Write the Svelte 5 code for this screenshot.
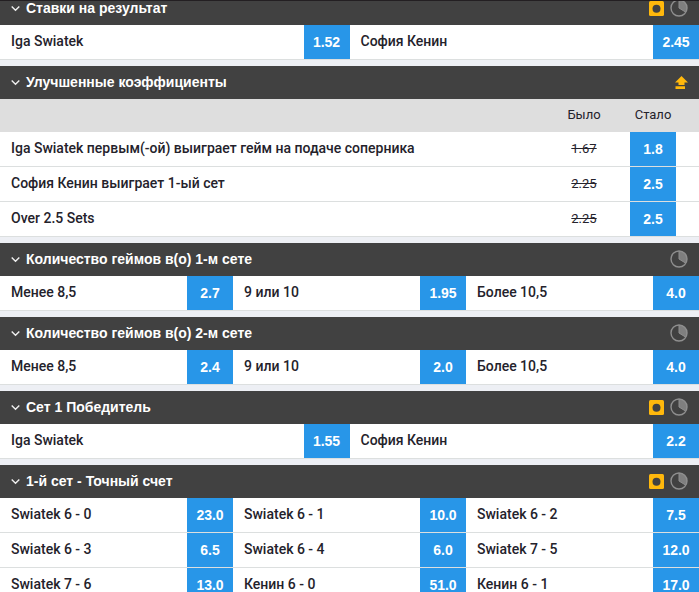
<script lang="ts">
	type Badge = 'cashout' | 'stats' | 'boost';

	interface Outcome {
		name: string;
		price: string;
		was?: string;
	}

	interface Market {
		title: string;
		badges: Badge[];
		columns: number;
		outcomes: Outcome[];
	}

	const markets: Market[] = [
		{
			title: 'Ставки на результат',
			badges: ['cashout', 'stats'],
			columns: 2,
			outcomes: [
				{ name: 'Iga Swiatek', price: '1.52' },
				{ name: 'София Кенин', price: '2.45' }
			]
		},
		{
			title: 'Улучшенные коэффициенты',
			badges: ['boost'],
			columns: 1,
			outcomes: [
				{
					name: 'Iga Swiatek первым(-ой) выиграет гейм на подаче соперника',
					was: '1.67',
					price: '1.8'
				},
				{ name: 'София Кенин выиграет 1-ый сет', was: '2.25', price: '2.5' },
				{ name: 'Over 2.5 Sets', was: '2.25', price: '2.5' }
			]
		},
		{
			title: 'Количество геймов в(о) 1-м сете',
			badges: ['stats'],
			columns: 3,
			outcomes: [
				{ name: 'Менее 8,5', price: '2.7' },
				{ name: '9 или 10', price: '1.95' },
				{ name: 'Более 10,5', price: '4.0' }
			]
		},
		{
			title: 'Количество геймов в(о) 2-м сете',
			badges: ['stats'],
			columns: 3,
			outcomes: [
				{ name: 'Менее 8,5', price: '2.4' },
				{ name: '9 или 10', price: '2.0' },
				{ name: 'Более 10,5', price: '4.0' }
			]
		},
		{
			title: 'Сет 1 Победитель',
			badges: ['cashout', 'stats'],
			columns: 2,
			outcomes: [
				{ name: 'Iga Swiatek', price: '1.55' },
				{ name: 'София Кенин', price: '2.2' }
			]
		},
		{
			title: '1-й сет - Точный счет',
			badges: ['cashout', 'stats'],
			columns: 3,
			outcomes: [
				{ name: 'Swiatek 6 - 0', price: '23.0' },
				{ name: 'Swiatek 6 - 1', price: '10.0' },
				{ name: 'Swiatek 6 - 2', price: '7.5' },
				{ name: 'Swiatek 6 - 3', price: '6.5' },
				{ name: 'Swiatek 6 - 4', price: '6.0' },
				{ name: 'Swiatek 7 - 5', price: '12.0' },
				{ name: 'Swiatek 7 - 6', price: '13.0' },
				{ name: 'Кенин 6 - 0', price: '51.0' },
				{ name: 'Кенин 6 - 1', price: '17.0' }
			]
		}
	];

	let collapsed = $state<Record<string, boolean>>({});

	function toggle(title: string) {
		collapsed[title] = !collapsed[title];
	}
</script>

<main class="viewport">
	<div class="markets">
		{#each markets as market (market.title)}
			<section class="market">
				<h2 class="market-heading">
					<button
						class="market-toggle"
						aria-expanded={!collapsed[market.title]}
						onclick={() => toggle(market.title)}
					>
						<svg class="chevron" viewBox="0 0 9 9" aria-hidden="true">
							<path d="M0.7 2.4 4.5 6.2 8.3 2.4" />
						</svg>
						<span class="market-title">{market.title}</span>
						{#each market.badges as badge}
							{#if badge === 'cashout'}
								<svg class="cashout" viewBox="0 0 15 15" aria-hidden="true">
									<rect width="15" height="15" rx="1.5" fill="#ffb80c" />
									<circle cx="7.5" cy="7.7" r="4" fill="#414141" />
								</svg>
							{:else if badge === 'stats'}
								<svg class="stats" viewBox="0 0 18 18" aria-hidden="true">
									<path d="M9 1v8l6.8 4.2A8 8 0 0 0 9 1z" fill="#7f7f7f" />
									<circle cx="9" cy="9" r="8" fill="none" stroke="#8f8f8f" stroke-width="1.4" />
									<path d="M9 1v8l6.8 4.2" fill="none" stroke="#8f8f8f" />
								</svg>
							{:else}
								<svg class="boost" viewBox="0 0 13 13" aria-hidden="true">
									<path d="M6.5 0 13 6.5H9.5V9H3.5V6.5H0zM0.5 10.3h9.5v2.7H0.5z" fill="#ffb80c" />
								</svg>
							{/if}
						{/each}
					</button>
				</h2>

				{#if !collapsed[market.title]}
					{#if market.columns === 1}
						<table class="boosted">
							<thead>
								<tr>
									<td></td>
									<th class="was" scope="col">Было</th>
									<th class="now" scope="col">Стало</th>
								</tr>
							</thead>
							<tbody>
								{#each market.outcomes as outcome}
									<tr>
										<th class="name" scope="row">{outcome.name}</th>
										<td class="was"><s>{outcome.was}</s></td>
										<td class="now"><button class="price">{outcome.price}</button></td>
									</tr>
								{/each}
							</tbody>
						</table>
					{:else}
						<div class="outcomes" class:three={market.columns === 3}>
							{#each market.outcomes as outcome}
								<div class="outcome">
									<span class="name">{outcome.name}</span>
									<button class="price" aria-label="{outcome.name} {outcome.price}">
										{outcome.price}
									</button>
								</div>
							{/each}
						</div>
					{/if}
				{/if}
			</section>
		{/each}
	</div>
</main>

<style>
	:global(body) {
		background: #edeff4;
		overflow: hidden;
	}

	.viewport {
		box-sizing: border-box;
		height: 100vh;
		overflow: hidden;
		border-top: 1px solid #231f22;
		font-family: 'Liberation Sans', Arial, sans-serif;
		font-size: 13px;
		color: #24222b;
	}

	.markets {
		display: flex;
		flex-direction: column;
		gap: 6px;
		/* list is scrolled slightly under the top edge */
		margin-top: -9px;
	}

	.market-heading {
		margin: 0;
	}

	.market-toggle {
		display: flex;
		align-items: center;
		gap: 6px;
		width: 100%;
		height: 33px;
		padding: 0 11px;
		border: 0;
		background: #414141;
		color: #fff;
		font: bold 14px 'Liberation Sans', Arial, sans-serif;
		text-align: left;
		cursor: pointer;
	}

	.market-title {
		flex: 1;
		padding-bottom: 2px;
	}

	.chevron {
		width: 9px;
		height: 9px;
		fill: none;
		stroke: #eee;
		stroke-width: 1.4;
	}

	.cashout {
		width: 15px;
		height: 15px;
	}

	.stats {
		width: 18px;
		height: 18px;
		margin-bottom: 2px;
	}

	.boost {
		width: 13px;
		height: 13px;
	}

	.outcomes {
		display: grid;
		grid-template-columns: repeat(2, 1fr);
	}

	.outcomes.three {
		grid-template-columns: repeat(3, 1fr);
	}

	.outcome {
		display: flex;
		align-items: center;
		border-bottom: 1px solid #dcdfdf;
		background: #fff;
	}

	.outcome .name {
		flex: 1;
		padding: 0 0 2px 11px;
	}

	.name {
		font-family: Roboto, Arial, sans-serif;
		font-size: 14px;
		font-weight: 500;
	}

	.price {
		width: 46px;
		height: 34px;
		padding: 0;
		border: 0;
		background: #2896e8;
		color: #fff;
		font: bold 14px 'Liberation Sans', Arial, sans-serif;
		cursor: pointer;
	}

	.price:hover {
		background: #1b86d6;
	}

	.boosted {
		width: 100%;
		border-spacing: 0;
		background: #fff;
	}

	.boosted th,
	.boosted td {
		padding: 0;
	}

	.boosted thead tr {
		height: 33px;
		background: #dedede;
	}

	.boosted thead th {
		padding-bottom: 2px;
		font-weight: 400;
	}

	.boosted tbody th,
	.boosted tbody td {
		height: 34px;
		border-bottom: 1px solid #dcdfdf;
	}

	.boosted tbody .name {
		height: 32px;
		padding: 0 0 2px 11px;
		text-align: left;
	}

	.boosted .was {
		width: 46px;
		font-family: Roboto, Arial, sans-serif;
		text-align: center;
	}

	.boosted tbody .was {
		height: 32px;
		padding-bottom: 2px;
	}

	.boosted .now {
		width: 92px;
		font-family: Roboto, Arial, sans-serif;
		text-align: center;
	}

	.boosted .price {
		display: block;
		margin: 0 auto;
	}
</style>
